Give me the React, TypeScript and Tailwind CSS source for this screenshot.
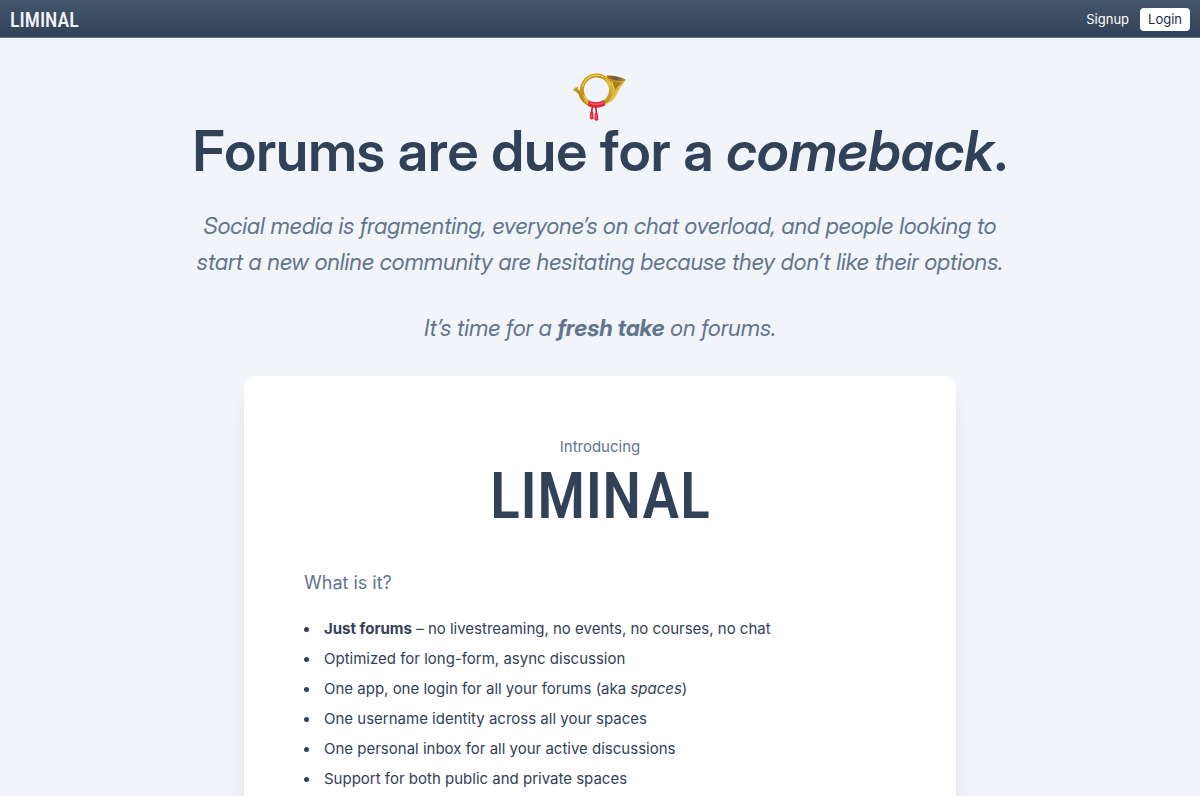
function PostHorn() {
  return (
    <svg viewBox="36 24 170 156" className="h-[52px] w-[56px]" role="img" aria-label="Postal horn">
      <defs>
        <linearGradient id="brass" x1="0" y1="0" x2="1" y2="1">
          <stop offset="0" stopColor="#d9a92c" />
          <stop offset="0.35" stopColor="#c08f17" />
          <stop offset="0.6" stopColor="#e6c443" />
          <stop offset="1" stopColor="#b07f12" />
        </linearGradient>
        <linearGradient id="bell" x1="0" y1="0" x2="1" y2="0">
          <stop offset="0" stopColor="#a87416" />
          <stop offset="0.5" stopColor="#6d5a48" />
          <stop offset="1" stopColor="#c98b35" />
        </linearGradient>
      </defs>
      <path d="M141 36 Q145 52 153 62 Q160 82 144 102 L130 120 Q152 122 168 98 Q180 72 198 50 Z" fill="url(#brass)" />
      <path d="M141 34 Q168 32 198 45 Q200 49 194 51 Q164 50 144 41 Z" fill="url(#bell)" />
      <path d="M150 47 Q168 57 190 54 Q174 66 169 76 Q158 63 150 47" fill="#a87b1b" />
      <path d="M157 51 Q166 69 157 90 Q150 108 134 119" fill="none" stroke="#f4df73" strokeWidth="3" />
      <path d="M45 77 Q58 78 64 99 Q73 118 94 123" fill="none" stroke="#b98715" strokeWidth="9" />
      <circle cx="110" cy="78" r="44" fill="none" stroke="url(#brass)" strokeWidth="12" />
      <path d="M68 68 A44 44 0 0 1 132 38" fill="none" stroke="#f5de69" strokeWidth="3" />
      <path d="M71 94 A43 43 0 0 0 91 115" fill="none" stroke="#f5de69" strokeWidth="3" />
      <path d="M40 75 L53 66 L55 70 L51 76 L58 83 L51 87 L47 80 L41 80 Z" fill="#c6941d" />
      <path d="M41 76 L53 68" stroke="#f0d45c" strokeWidth="2" />
      <path d="M86 109 Q110 121 132 108 L138 124 Q112 140 84 126 Z" fill="#df2c40" />
      <path d="M90 117 Q111 126 132 116" fill="none" stroke="#ff7180" strokeWidth="3" />
      <path d="M99 126 Q96 134 96 146 M107 126 Q110 138 110 150" fill="none" stroke="#cc2438" strokeWidth="5" />
      <path d="M91 144 h9 l2 20 q-6 6 -12 0 Z M105 148 h9 l2 20 q-6 6 -12 0 Z" fill="#dd2b3f" />
      <path d="M95 150 v12 M109 154 v12" stroke="#ff6c7b" strokeWidth="2" />
    </svg>
  );
}

const wordmark =
  "font-['Roboto_Condensed','Liberation_Sans_Narrow','Roboto',sans-serif] font-medium";
const display = "font-['Inter_Display','Inter',sans-serif]";

const features = [
  <><strong className="font-bold">Just forums</strong> – no livestreaming, no events, no courses, no chat</>,
  <>Optimized for long-form, async discussion</>,
  <>One app, one login for all your forums (aka <em>spaces</em>)</>,
  <>One username identity across all your spaces</>,
  <>One personal inbox for all your active discussions</>,
  <>Support for both public and private spaces</>,
];

export default function App() {
  return (
    <div className="min-h-screen bg-slate-100 font-['Inter',sans-serif] text-slate-700">
      <header className="flex items-center justify-between border-b border-slate-500 bg-linear-to-b from-slate-600 to-slate-700 px-[10px] pt-2 pb-[6px]">
        <a href="#" className={`${wordmark} text-[20px] leading-[20px] text-slate-100`}>LIMINAL</a>
        <nav className="flex items-center gap-[11px] text-[13px] leading-[15px]">
          <a href="#signup" className="text-white">Signup</a>
          <a href="#login" className="rounded-[4px] bg-white px-2 py-1 text-slate-800">Login</a>
        </nav>
      </header>
      <main className="flex flex-col items-center px-6 pt-[34px]">
        <PostHorn />
        <h1 className={`${display} text-center text-[56px] leading-[54px] font-semibold`}>
          Forums are due for a <em>comeback</em>.
        </h1>
        <div className={`${display} mt-[30px] flex flex-col gap-[30px] text-center text-[23px] leading-[36px] text-slate-500 italic`}>
          <p>
            Social media is fragmenting, everyone’s on chat overload, and people looking to{" "}
            <br />
            start a new online community are hesitating because they don’t like their options.
          </p>
          <p>
            It’s time for a <strong className="font-bold">fresh take</strong> on forums.
          </p>
        </div>
        <section className="mt-[30px] w-full max-w-[712px] rounded-[11px] bg-white px-[60px] pt-[60px] pb-16 shadow-xl">
          <div className="flex flex-col items-center">
            <p className="text-[15px] leading-[22px] text-slate-500">Introducing</p>
            <h2 className={`${wordmark} text-[64px] leading-[78px]`}>LIMINAL</h2>
          </div>
          <h3 className="mt-[34px] text-[18px] leading-[26px] text-slate-500">What is it?</h3>
          <ul className="mt-[18px] flex flex-col text-[15px] leading-[30px]">
            {features.map((feature, i) => (
              <li key={i} className="flex items-center gap-[15px] before:size-[5px] before:rounded-full before:bg-slate-700">
                <span>{feature}</span>
              </li>
            ))}
          </ul>
        </section>
      </main>
    </div>
  );
}
